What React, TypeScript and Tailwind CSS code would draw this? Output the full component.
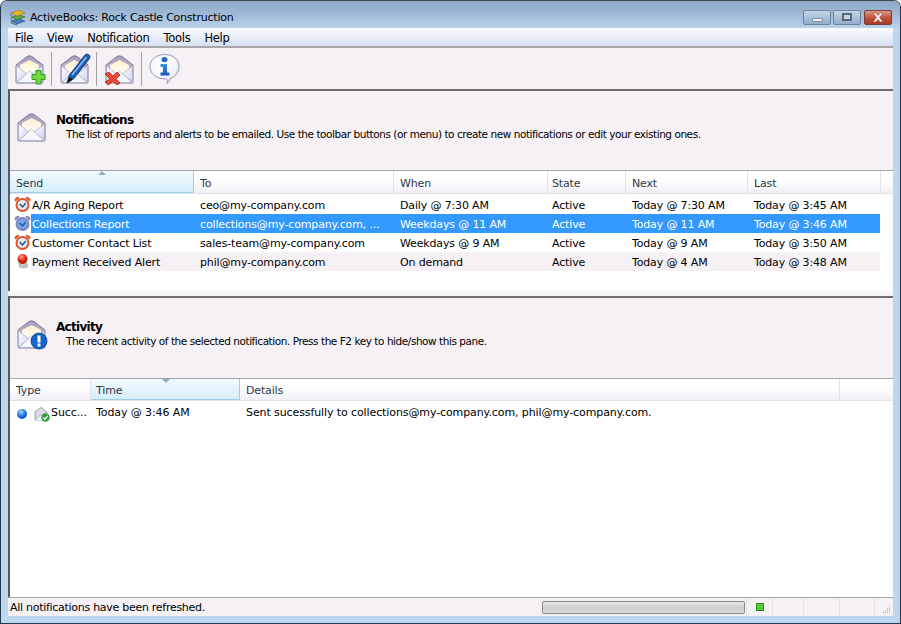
import React from 'react'

const font = { fontFamily: '"DejaVu Sans", Tahoma, sans-serif' }

const Envelope = ({ children }: { children?: React.ReactNode }) => (
    <svg width="32" height="32" viewBox="0 0 32 32">
        <defs>
            <linearGradient id="envBack" x1="0" y1="0" x2="0" y2="1">
                <stop offset="0" stopColor="#a99cbc" />
                <stop offset="1" stopColor="#d3cbdc" />
            </linearGradient>
            <linearGradient id="envBody" x1="0" y1="0" x2="1" y2="1">
                <stop offset="0" stopColor="#ffffff" />
                <stop offset="1" stopColor="#cdd0ee" />
            </linearGradient>
            <linearGradient id="envCream" x1="0" y1="0" x2="0" y2="1">
                <stop offset="0" stopColor="#fff0c8" />
                <stop offset="1" stopColor="#fffdf4" />
            </linearGradient>
        </defs>
        <path d="M2 12 L13 3.5 Q15.5 2 18 3.5 L29 12 L29 29 Q29 30 28 30 L3 30 Q2 30 2 29 Z" fill="url(#envBack)" stroke="#7f7c9c" strokeWidth="1" />
        <path d="M6 12 L15.5 7 L25 12 L25 20 L6 20 Z" fill="url(#envCream)" />
        <path d="M2.5 13 L13 21 L2.5 29.5 Z" fill="url(#envBody)" stroke="#a6a8c8" strokeWidth="0.7" />
        <path d="M28.5 13 L18 21 L28.5 29.5 Z" fill="url(#envBody)" stroke="#a6a8c8" strokeWidth="0.7" />
        <path d="M3 29.5 L15.5 18 L28 29.5 Z" fill="#f6f6fd" stroke="#a6a8c8" strokeWidth="0.7" />
        {children}
    </svg>
)

const PlusBadge = () => (
    <path d="M22 17.5 H27 V21.5 H31 V26.5 H27 V31 H22 V26.5 H18 V21.5 H22 Z" fill="#72d83c" stroke="#2f9a20" strokeWidth="1" />
)

const XBadge = () => (
    <path d="M1 21 L5 19 L9 23 L13 19 L16 22 L12 26 L16 30 L13 32 L9 28.5 L4 32 L1 29 L6 26 Z" fill="#ec4a30" stroke="#b02c18" strokeWidth="0.8" />
)

const PenBadge = () => (
    <g>
        <path d="M8 30 L10.5 22 L26 2 C28.5 0 32 2 30.5 5.5 L14.5 26 Z" fill="#1f62b8" stroke="#103870" strokeWidth="1" />
        <path d="M13 22 L27.5 4" stroke="#8ec2f2" strokeWidth="1.4" />
        <path d="M8 30 L10.5 24 L13.5 26.5 Z" fill="#101010" />
    </g>
)

const InfoBubble = () => (
    <svg width="32" height="32" viewBox="0 0 32 32">
        <defs>
            <radialGradient id="bub" cx="0.4" cy="0.35" r="0.8">
                <stop offset="0" stopColor="#ffffff" />
                <stop offset="0.6" stopColor="#f4f5fc" />
                <stop offset="1" stopColor="#bcc4e2" />
            </radialGradient>
            <linearGradient id="ibar" x1="0" y1="0" x2="0" y2="1">
                <stop offset="0" stopColor="#3a94e0" />
                <stop offset="1" stopColor="#0f57b4" />
            </linearGradient>
        </defs>
        <path d="M15.5 1.5 C25 1.5 30 7 30 13.5 C30 20 25.5 24.5 21.5 25 C21 27 20.5 29 18 30.5 C18.5 28.5 18.5 27 17.5 25.8 C8 26.5 1 21 1 13.5 C1 6.5 7.5 1.5 15.5 1.5 Z" fill="url(#bub)" stroke="#9498b4" strokeWidth="1" />
        <ellipse cx="15.5" cy="6.5" rx="3" ry="2.6" fill="#1a6cc8" />
        <path d="M11.5 11 H18 V19.5 H20.5 V22.5 H11.5 V19.5 H14 V14 H11.5 Z" fill="url(#ibar)" />
    </svg>
)

const Books = () => (
    <svg width="16" height="18" viewBox="0 0 16 18">
        <path d="M1 13 L9 11 L15 13 L7 16 Z" fill="#3f7fc4" stroke="#244a78" strokeWidth="0.6" />
        <path d="M1 9 L9 7 L15 9 L7 12 Z" fill="#5ca84a" stroke="#2f6426" strokeWidth="0.6" />
        <path d="M1 5 L9 2 L15 5 L7 8 Z" fill="#e8b72e" stroke="#8a6a14" strokeWidth="0.6" />
        <path d="M1 6 V8 M1 10 V12 M1 14 V15 L7 17" stroke="#5a4a30" strokeWidth="0.8" fill="none" />
    </svg>
)

const Clock = ({ dim }: { dim?: boolean }) => {
    const ring = dim ? '#8083bc' : '#e0552c'
    return (
        <svg width="17" height="17" viewBox="0 0 17 17">
            <path d="M0.5 4.5 C0.5 2 2.5 0.5 5 1 L5.5 2 L1.5 5.5 Z M16.5 4.5 C16.5 2 14.5 0.5 12 1 L11.5 2 L15.5 5.5 Z" fill={ring} />
            <circle cx="8.5" cy="9" r="7" fill={ring} />
            <circle cx="8.5" cy="9" r="5" fill={dim ? '#6ea8ec' : '#dcebfa'} />
            <path d="M5.8 8 L8.5 11 L11.6 7.2" stroke={dim ? '#35508e' : '#2a4a78'} strokeWidth="1.4" fill="none" />
        </svg>
    )
}

const RedBall = () => (
    <svg width="17" height="17" viewBox="0 0 17 17">
        <defs>
            <radialGradient id="ball" cx="0.4" cy="0.3" r="0.7">
                <stop offset="0" stopColor="#ffa48a" />
                <stop offset="0.5" stopColor="#e8321c" />
                <stop offset="1" stopColor="#a81608" />
            </radialGradient>
        </defs>
        <path d="M5 10 H13 L14 13.5 C11.5 15.5 7 15.5 5 13.5 Z" fill="#c8c2c2" stroke="#a09a9a" strokeWidth="0.5" />
        <circle cx="8.5" cy="6" r="5" fill="url(#ball)" />
    </svg>
)

const BlueDot = () => (
    <svg width="12" height="12" viewBox="0 0 12 12">
        <defs>
            <radialGradient id="dot" cx="0.4" cy="0.3" r="0.7">
                <stop offset="0" stopColor="#a6d4ff" />
                <stop offset="0.6" stopColor="#1d7ae4" />
                <stop offset="1" stopColor="#0e4fa8" />
            </radialGradient>
        </defs>
        <circle cx="6" cy="6" r="5" fill="url(#dot)" />
    </svg>
)

const SentIcon = () => (
    <svg width="16" height="16" viewBox="0 0 16 16">
        <path d="M1 6 L7 1.5 L13 6 V14 H1 Z" fill="#d9dae2" stroke="#84869a" strokeWidth="0.8" />
        <path d="M1 14 L7 8.5 L13 14" fill="#eef0f6" stroke="#9a9cae" strokeWidth="0.6" />
        <circle cx="11.5" cy="11.5" r="4.2" fill="#2f9c3e" />
        <path d="M9.3 11.5 L11 13.2 L13.8 9.8" stroke="#fff" strokeWidth="1.3" fill="none" />
    </svg>
)

const WinButtons = () => (
    <div className="flex gap-[2px]">
        <div className="w-[28px] h-[15px] rounded-[2px] border border-[#6d8199] bg-gradient-to-b from-[#c4d6e8] to-[#92aecb] flex items-end justify-center pb-[2px]">
            <div className="w-[11px] h-[4px] bg-[#eef2f6] border border-[#7c8ca0] rounded-[1px]" />
        </div>
        <div className="w-[28px] h-[15px] rounded-[2px] border border-[#6d8199] bg-gradient-to-b from-[#c4d6e8] to-[#92aecb] flex items-center justify-center">
            <div className="w-[10px] h-[8px] border-2 border-[#56677c] bg-[#c8d6e6]" />
        </div>
        <div className="w-[28px] h-[15px] ml-[1px] rounded-[2px] border border-[#7a3c34] bg-gradient-to-b from-[#dd9a88] via-[#c4533c] to-[#a83a28] flex items-center justify-center">
            <svg width="16" height="11" viewBox="0 0 16 11">
                <path d="M3 1 H6 L8 3.5 L10 1 H13 L9.6 5.5 L13 10 H10 L8 7.5 L6 10 H3 L6.4 5.5 Z" fill="#f6f0ee" stroke="#8a3a2c" strokeWidth="0.5" />
            </svg>
        </div>
    </div>
)

const ToolButton = ({ children }: { children: React.ReactNode }) => (
    <div className="w-[32px] h-[32px] flex items-center justify-center">{children}</div>
)

const ToolSep = () => <div className="w-px h-[34px] bg-[#a5a3a6] ml-[5px] mr-[7px]" />

const PaneHeading = ({ icon, title, text, tall }: { icon: React.ReactNode; title: string; text: string; tall?: boolean }) => (
    <div className={`flex items-start pl-[6px] pt-[20px] bg-[#f6f1f5] shrink-0 ${tall ? 'h-[80px]' : 'h-[79px]'}`}>
        <div className="w-[32px] h-[32px] shrink-0">{icon}</div>
        <div className="ml-[8px] pt-[2px]">
            <div className="text-[12px] leading-[14px] font-bold text-black tracking-[-0.7px]">{title}</div>
            <div className="text-[10.5px] leading-[15px] pl-[10px] text-black tracking-[-0.45px] whitespace-nowrap">{text}</div>
        </div>
    </div>
)

type Col = { label: string; width: string; pad: string; sort?: 'up' | 'down'; arrow?: string }

const GridHeader = ({ cols, h }: { cols: Col[]; h: string }) => (
    <div className={`flex shrink-0 ${h} border-t border-[#a4a4a8] border-b border-b-[#dfe3ea] bg-gradient-to-b from-white from-40% to-[#f0f0f5]`}>
        {cols.map(c => (
            <div
                key={c.label}
                className={`relative ${c.width} ${c.pad} shrink-0 flex items-center text-[11px] tracking-[-0.15px] text-[#2c3a48] border-r ${c.sort ? 'pt-[5px] border-[#9cd0ea] border-b bg-gradient-to-b from-[#f4fbfe] to-[#d5eefa]' : 'pt-[4px] border-[#e2e2e8]'}`}
            >
                {c.sort && (
                    <svg className={`absolute top-0 ${c.arrow}`} width="8" height="5" viewBox="0 0 8 5">
                        <path d={c.sort === 'up' ? 'M4 0 L8 4 H0 Z' : 'M0 0 H8 L4 4 Z'} fill="#8fb0c8" />
                    </svg>
                )}
                {c.label}
            </div>
        ))}
        <div className="flex-1" />
    </div>
)

const notifCols: Col[] = [
    { label: 'Send', width: 'w-[184px]', pad: 'pl-[6px]', sort: 'up', arrow: 'left-[88px]' },
    { label: 'To', width: 'w-[200px]', pad: 'pl-[6px]' },
    { label: 'When', width: 'w-[154px]', pad: 'pl-[6px]' },
    { label: 'State', width: 'w-[78px]', pad: 'pl-[4px]' },
    { label: 'Next', width: 'w-[122px]', pad: 'pl-[6px]' },
    { label: 'Last', width: 'w-[133px]', pad: 'pl-[6px]' },
]

const rows = [
    { send: 'A/R Aging Report', to: 'ceo@my-company.com', when: 'Daily @ 7:30 AM', next: 'Today @ 7:30 AM', last: 'Today @ 3:45 AM' },
    { send: 'Collections Report', to: 'collections@my-company.com, ...', when: 'Weekdays @ 11 AM', next: 'Today @ 11 AM', last: 'Today @ 3:46 AM', selected: true },
    { send: 'Customer Contact List', to: 'sales-team@my-company.com', when: 'Weekdays @ 9 AM', next: 'Today @ 9 AM', last: 'Today @ 3:50 AM' },
    { send: 'Payment Received Alert', to: 'phil@my-company.com', when: 'On demand', next: 'Today @ 4 AM', last: 'Today @ 3:48 AM', ball: true, alt: true },
]

const NotifRow = ({ r }: { r: (typeof rows)[number] }) => (
    <div className="flex h-[19px] w-[870px] items-center text-[11px] tracking-[-0.15px] text-black">
        <div className="w-[21px] shrink-0 flex justify-center pl-[3px]">
            {r.ball ? <RedBall /> : <Clock dim={r.selected} />}
        </div>
        <div className={`flex flex-1 h-full items-center pt-[3px] ${r.selected ? 'bg-[#3399ff] text-white' : r.alt ? 'bg-[#f6f1f5]' : ''}`}>
            <div className="w-[164px] pl-[1px] shrink-0 whitespace-nowrap">{r.send}</div>
            <div className="w-[200px] pl-[5px] shrink-0 whitespace-nowrap">{r.to}</div>
            <div className="w-[154px] pl-[5px] shrink-0 whitespace-nowrap">{r.when}</div>
            <div className="w-[78px] pl-[3px] shrink-0">Active</div>
            <div className="w-[122px] pl-[5px] shrink-0 whitespace-nowrap">{r.next}</div>
            <div className="pl-[5px] whitespace-nowrap">{r.last}</div>
        </div>
    </div>
)

const activityCols: Col[] = [
    { label: 'Type', width: 'w-[81px]', pad: 'pl-[6px]' },
    { label: 'Time', width: 'w-[149px]', pad: 'pl-[5px]', sort: 'down', arrow: 'left-[71px]' },
    { label: 'Details', width: 'w-[600px]', pad: 'pl-[6px]' },
]

const StatusCell = ({ w, children }: { w: string; children?: React.ReactNode }) => (
    <div className={`${w} h-full shrink-0 border-l border-[#e4dfe2] flex items-center justify-center`}>{children}</div>
)

export default function App() {
    return (
        <div style={font} className="w-[901px] h-[624px] overflow-hidden bg-[#bcd6f0] rounded-t-[7px] border border-[#243a4c] border-t-[#3e4650] flex flex-col">
            {/* title bar */}
            <div className="h-[27px] shrink-0 flex items-center pl-[9px] pr-[8px] pt-[5px] bg-gradient-to-b from-[#8ea7c4] via-[#a0bad7] to-[#bad3ec]">
                <Books />
                <span className="ml-[4px] pt-[2px] text-[11px] tracking-[-0.23px] text-black">ActiveBooks: Rock Castle Construction</span>
                <div className="flex-1" />
                <WinButtons />
            </div>

            <div className="flex-1 mx-[7px] mb-[7px] flex flex-col min-h-0 bg-white">
                {/* menu */}
                <div className="h-[20px] shrink-0 flex items-center gap-[14px] pl-[7px] pt-[3px] text-[11.5px] tracking-[-0.3px] text-black bg-gradient-to-b from-[#fbfbfe] to-[#d8e0f2] border-b-2 border-[#a8a6ab]">
                    <span>File</span>
                    <span>View</span>
                    <span>Notification</span>
                    <span>Tools</span>
                    <span>Help</span>
                </div>

                {/* toolbar */}
                <div className="h-[41px] shrink-0 flex items-center pl-[6px] bg-[#f6f1f5]">
                    <ToolButton><Envelope><PlusBadge /></Envelope></ToolButton>
                    <ToolSep />
                    <ToolButton><Envelope><PenBadge /></Envelope></ToolButton>
                    <ToolSep />
                    <ToolButton><Envelope><XBadge /></Envelope></ToolButton>
                    <ToolSep />
                    <ToolButton><InfoBubble /></ToolButton>
                </div>

                {/* notifications pane */}
                <div className="h-[202px] shrink-0 flex flex-col border-t-2 border-[#6f6f72] border-l-2 border-l-[#5a5a5e] bg-white">
                    <PaneHeading
                        icon={<Envelope />}
                        title="Notifications"
                        text="The list of reports and alerts to be emailed. Use the toolbar buttons (or menu) to create new notifications or edit your existing ones."
                    />
                    <GridHeader cols={notifCols} h="h-[24px]" />
                    <div className="flex-1 pt-[1px]">
                        {rows.map(r => <NotifRow key={r.send} r={r} />)}
                    </div>
                </div>

                <div className="h-[5px] shrink-0 bg-[#f8f5f8]" />

                {/* activity pane */}
                <div className="flex-1 min-h-0 flex flex-col border-t-2 border-[#6f6f72] border-l-2 border-l-[#5a5a5e] bg-white">
                    <PaneHeading
                        tall
                        icon={<Envelope><circle cx="23" cy="23" r="8" fill="#1467c8" stroke="#0c3f88" strokeWidth="0.8" /><rect x="21.5" y="17.5" width="3" height="7" fill="#fff" /><rect x="21.5" y="25.5" width="3" height="3" fill="#fff" /></Envelope>}
                        title="Activity"
                        text="The recent activity of the selected notification. Press the F2 key to hide/show this pane."
                    />
                    <GridHeader cols={activityCols} h="h-[23px]" />
                    <div className="flex h-[22px] pt-[3px] items-center text-[11px] tracking-[-0.1px] text-black">
                        <div className="w-[81px] shrink-0 flex items-center pl-[6px]">
                            <BlueDot />
                            <span className="ml-[6px]"><SentIcon /></span>
                            <span className="ml-[1px] whitespace-nowrap">Succ...</span>
                        </div>
                        <div className="w-[149px] shrink-0 pl-[5px] whitespace-nowrap">Today @ 3:46 AM</div>
                        <div className="pl-[6px] whitespace-nowrap">Sent sucessfully to collections@my-company.com, phil@my-company.com.</div>
                    </div>
                </div>

                {/* status bar */}
                <div className="h-[19px] shrink-0 flex items-center border-t border-[#a4a4a8] bg-[#f6f1f5] text-[11px] tracking-[-0.28px] text-black">
                    <div className="flex-1 pl-[2px] pt-[2px] whitespace-nowrap">All notifications have been refreshed.</div>
                    <div className="w-[203px] h-[13px] shrink-0 rounded-[2px] border border-[#8a8a8a] bg-gradient-to-b from-[#eaeaea] via-[#cfcfcf] to-[#dcdcdc]" />
                    <StatusCell w="w-[26px] ml-[1px]">
                        <div className="w-[8px] h-[8px] bg-[#50d030] border border-[#2f8a20]" />
                    </StatusCell>
                    <StatusCell w="w-[31px]" />
                    <StatusCell w="w-[36px]" />
                    <StatusCell w="w-[35px]" />
                    <StatusCell w="w-[19px]">
                        <svg width="8" height="8" viewBox="0 0 8 8" className="ml-[6px] mt-[5px]">
                            <path d="M6 0h1v1H6zM4 2h1v1H4zM6 2h1v1H6zM2 4h1v1H2zM4 4h1v1H4zM6 4h1v1H6zM0 6h1v1H0zM2 6h1v1H2zM4 6h1v1H4zM6 6h1v1H6z" fill="#a8a8a8" />
                        </svg>
                    </StatusCell>
                </div>
            </div>
        </div>
    )
}
